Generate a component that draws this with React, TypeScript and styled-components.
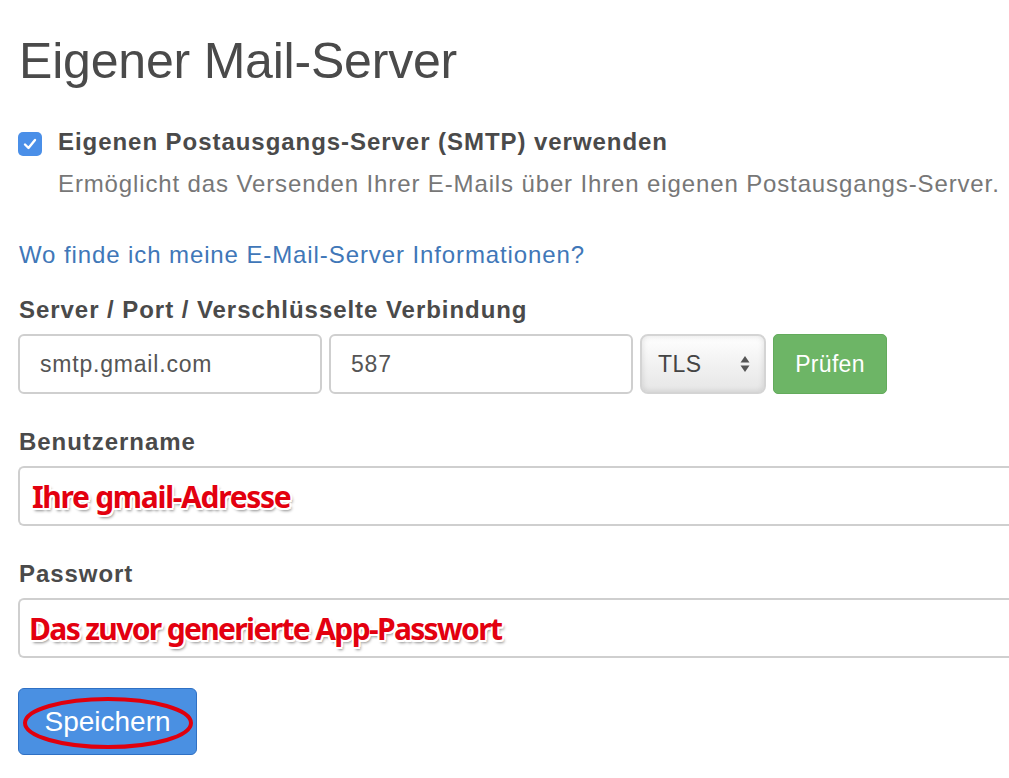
import React from "react";
import styled, { createGlobalStyle } from "styled-components";

const Global = createGlobalStyle`
  html, body { margin: 0; padding: 0; background: #fff; }
  body { font-family: "Liberation Sans", Arial, sans-serif; color: #4a4a4a; overflow: hidden; }
`;

const Page = styled.div`
  box-sizing: border-box;
  padding: 33px 0 24px 19px;
  width: 100%;
  overflow: hidden;
`;

const Title = styled.h1`
  margin: 0;
  font-size: 50px;
  line-height: 56px;
  font-weight: 400;
  color: #4a4a4a;
  letter-spacing: -0.2px;
`;

const CheckRow = styled.div`
  display: flex;
  align-items: flex-start;
  gap: 16px;
  margin-top: 39px;
`;

const CheckBox = styled.span`
  flex: none;
  width: 24px;
  height: 24px;
  margin-top: 4px;
  margin-left: -1px;
  border-radius: 5px;
  background: #4a8fe8;
  display: flex;
  align-items: center;
  justify-content: center;
`;

const CheckText = styled.div`
  display: flex;
  flex-direction: column;
  gap: 14px;
  white-space: nowrap;
`;

const BoldLabel = styled.div<{ $top?: number }>`
  font-size: 24px;
  line-height: 28px;
  font-weight: 700;
  letter-spacing: 0.95px;
  color: #4a4a4a;
  margin-top: ${(p) => p.$top ?? 0}px;
`;

const Desc = styled.div`
  font-size: 24px;
  line-height: 28px;
  letter-spacing: 0.87px;
  color: #777;
`;

const Link = styled.a`
  display: block;
  margin-top: 43px;
  font-size: 24px;
  line-height: 28px;
  letter-spacing: 0.9px;
  color: #4077b8;
  text-decoration: none;
`;

const FieldRow = styled.div`
  display: flex;
  gap: 7px;
  margin-top: 10px;
  margin-left: -1px;
`;

const Input = styled.div<{ $w?: number }>`
  box-sizing: border-box;
  width: ${(p) => (p.$w ? `${p.$w}px` : "1100px")};
  height: 60px;
  border: 2px solid #cfcfcf;
  border-radius: 6px;
  background: #fff;
  display: flex;
  align-items: center;
  padding-left: 20px;
  font-size: 23px;
  letter-spacing: 0.8px;
  color: #555;
  flex: none;
`;

const Select = styled.div`
  box-sizing: border-box;
  width: 126px;
  height: 60px;
  border: 2px solid #d4d4d4;
  border-radius: 8px;
  background: linear-gradient(#ffffff, #f4f4f4 40%, #e6e6e6);
  box-shadow: inset 0 0 6px rgba(0, 0, 0, 0.12);
  display: flex;
  align-items: center;
  justify-content: space-between;
  padding: 0 14px 0 16px;
  font-size: 23px;
  letter-spacing: 0.5px;
  color: #444;
  flex: none;
`;

const GreenButton = styled.div`
  box-sizing: border-box;
  width: 114px;
  height: 60px;
  border-radius: 5px;
  background: #6db566;
  border: 1px solid #63ab5c;
  color: #fff;
  font-size: 23px;
  letter-spacing: 0.3px;
  display: flex;
  align-items: center;
  justify-content: center;
  flex: none;
`;

const Annot = styled.span<{ $spacing: number; $shift: number }>`
  font-family: "Noto Sans", "Open Sans", sans-serif;
  font-weight: 700;
  font-size: 30px;
  letter-spacing: ${(p) => p.$spacing}px;
  color: #e3000f;
  margin-left: ${(p) => p.$shift}px;
  text-shadow: -2px 0 #fff, 2px 0 #fff, 0 -2px #fff, 0 2px #fff, 1.5px 1.5px #fff,
    -1.5px -1.5px #fff, 1.5px -1.5px #fff, -1.5px 1.5px #fff, 2px 3px 3px rgba(0, 0, 0, 0.45);
`;

const FullInput = styled(Input)`
  margin-top: 10px;
  margin-left: -1px;
  border-right: none;
`;

const SaveButton = styled.div`
  position: relative;
  box-sizing: border-box;
  margin-top: 30px;
  margin-left: -1px;
  width: 179px;
  height: 67px;
  border-radius: 6px;
  background: #4a90e2;
  border: 1px solid #2f70c4;
  color: #fff;
  font-size: 28px;
  display: flex;
  align-items: center;
  justify-content: center;
`;

const Ellipse = styled.svg`
  position: absolute;
  left: 3px;
  top: 7px;
  pointer-events: none;
`;

export default function App() {
  return (
    <>
      <Global />
      <Page>
        <Title>Eigener Mail-Server</Title>
        <CheckRow>
          <CheckBox>
            <svg width="14" height="12" viewBox="0 0 14 12">
              <path d="M2 6.5 L5.5 10 L12 2" fill="none" stroke="#fff" strokeWidth="2.4" strokeLinecap="round" strokeLinejoin="round" />
            </svg>
          </CheckBox>
          <CheckText>
            <BoldLabel>Eigenen Postausgangs-Server (SMTP) verwenden</BoldLabel>
            <Desc>Ermöglicht das Versenden Ihrer E-Mails über Ihren eigenen Postausgangs-Server.</Desc>
          </CheckText>
        </CheckRow>
        <Link href="#">Wo finde ich meine E-Mail-Server Informationen?</Link>
        <BoldLabel $top={27}>Server / Port / Verschlüsselte Verbindung</BoldLabel>
        <FieldRow>
          <Input $w={304}>smtp.gmail.com</Input>
          <Input $w={304}>587</Input>
          <Select>
            <span>TLS</span>
            <svg width="10" height="20" viewBox="0 0 10 20">
              <path d="M5 2 L9.5 8.5 H0.5 Z" fill="#555" />
              <path d="M5 18 L9.5 11.5 H0.5 Z" fill="#555" />
            </svg>
          </Select>
          <GreenButton>Prüfen</GreenButton>
        </FieldRow>
        <BoldLabel $top={34}>Benutzername</BoldLabel>
        <FullInput>
          <Annot $spacing={-1.3} $shift={-8}>Ihre gmail-Adresse</Annot>
        </FullInput>
        <BoldLabel $top={34}>Passwort</BoldLabel>
        <FullInput>
          <Annot $spacing={-1.65} $shift={-11}>Das zuvor generierte App-Passwort</Annot>
        </FullInput>
        <SaveButton>
          Speichern
          <Ellipse width="172" height="54" viewBox="0 0 172 54">
            <ellipse cx="86" cy="27" rx="83" ry="24" fill="none" stroke="#e0000d" strokeWidth="4" />
          </Ellipse>
        </SaveButton>
      </Page>
    </>
  );
}
